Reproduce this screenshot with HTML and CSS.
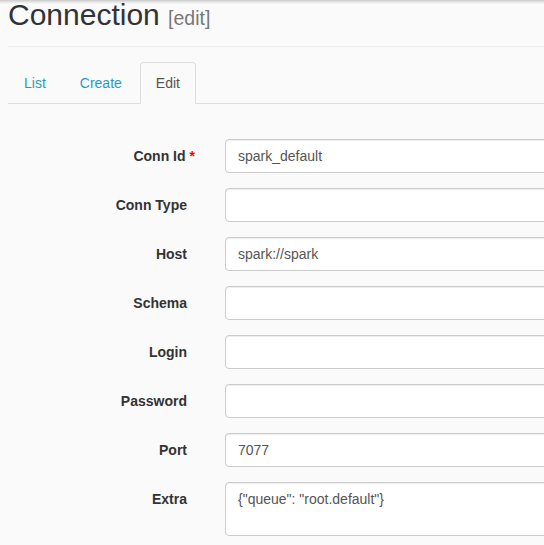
FILE: index.html
```html
<!DOCTYPE html>
<html>
<head>
<meta charset="utf-8">
<title>Connection</title>
<link rel="stylesheet" href="styles.css">
</head>
<body>
<div class="page">
  <div class="page-header">
    <h1>Connection <small>[edit]</small></h1>
  </div>
  <ul class="nav-tabs">
    <li><a href="#">List</a></li>
    <li><a href="#">Create</a></li>
    <li class="active"><a href="#">Edit</a></li>
  </ul>
  <form class="admin-form">
    <div class="form-group">
      <label class="control-label" for="conn_id">Conn Id<strong class="req">*</strong></label>
      <input class="form-control" id="conn_id" type="text" value="spark_default">
    </div>
    <div class="form-group">
      <label class="control-label" for="conn_type">Conn Type</label>
      <input class="form-control" id="conn_type" type="text" value="">
    </div>
    <div class="form-group">
      <label class="control-label" for="host">Host</label>
      <input class="form-control" id="host" type="text" value="spark://spark">
    </div>
    <div class="form-group">
      <label class="control-label" for="schema">Schema</label>
      <input class="form-control" id="schema" type="text" value="">
    </div>
    <div class="form-group">
      <label class="control-label" for="login">Login</label>
      <input class="form-control" id="login" type="text" value="">
    </div>
    <div class="form-group">
      <label class="control-label" for="password">Password</label>
      <input class="form-control" id="password" type="password" value="">
    </div>
    <div class="form-group">
      <label class="control-label" for="port">Port</label>
      <input class="form-control" id="port" type="text" value="7077">
    </div>
    <div class="form-group">
      <label class="control-label" for="extra">Extra</label>
      <textarea class="form-control textarea" id="extra">{"queue": "root.default"}</textarea>
    </div>
  </form>
</div>
</body>
</html>
```
FILE: styles.css
```css
html {
  background: linear-gradient(#c9c9c9 0, #e6e6e6 2px, #fafafa 4px) no-repeat top left / 100% 4px, #fafafa;
  overflow: hidden;
}
body {
  margin: 0;
  font-family: "Liberation Sans", Arial, sans-serif;
  font-size: 14px;
  line-height: 20px;
  color: #333;
  overflow: hidden;
}
.page {
  padding-left: 8px;
}
.page-header {
  padding-bottom: 16px;
  border-bottom: 1px solid #eee;
}
h1 {
  margin: 0;
  height: 30px;
  font-size: 30px;
  line-height: 30px;
  font-weight: 500;
  color: #333;
  white-space: nowrap;
}
h1 small {
  font-size: 65%;
  line-height: 1;
  color: #777;
  font-weight: 400;
}
.nav-tabs {
  list-style: none;
  margin: 15px 0 0;
  padding: 0;
  display: flex;
  border-bottom: 1px solid #ddd;
}
.nav-tabs li {
  margin-bottom: -1px;
  margin-right: 2px;
}
.nav-tabs a {
  display: block;
  padding: 10px 15px;
  line-height: 20px;
  border: 1px solid transparent;
  border-radius: 4px 4px 0 0;
  color: #1f9dbf;
  text-decoration: none;
}
.nav-tabs .active a {
  color: #555;
  background: #fafafa;
  border-color: #ddd #ddd transparent;
}
.admin-form {
  padding-top: 35px;
}
.form-group {
  display: flex;
  align-items: flex-start;
  margin-bottom: 15px;
}
.control-label {
  flex: 0 0 179px;
  text-align: right;
  font-weight: 700;
  padding-top: 7px;
  line-height: 20px;
  white-space: nowrap;
}
.req {
  color: red;
  margin-left: 4px;
  margin-right: -8px;
}
.form-control {
  flex: 0 0 360px;
  margin-left: 38px;
  box-sizing: border-box;
  height: 34px;
  padding: 6px 12px;
  font-family: "Liberation Sans", Arial, sans-serif;
  font-size: 14px;
  line-height: 20px;
  color: #555;
  background: #fff;
  border: 1px solid #ccc;
  border-radius: 4px;
  box-shadow: inset 0 1px 1px rgba(0, 0, 0, .075);
  outline: none;
}
.textarea {
  height: 54px;
  resize: none;
  overflow: hidden;
}
```
